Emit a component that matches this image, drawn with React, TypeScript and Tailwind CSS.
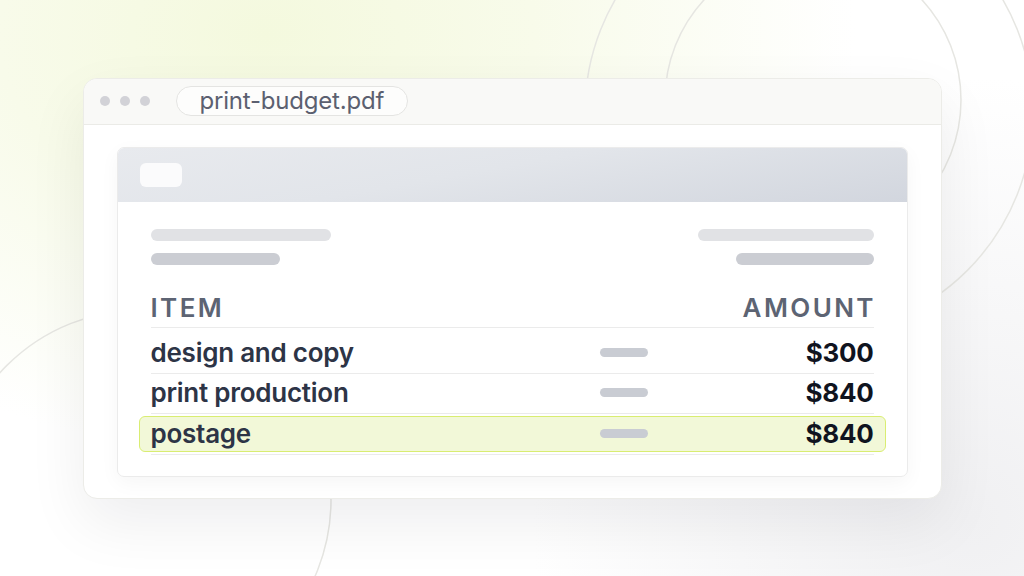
import React from 'react';

const rows = [
  { item: 'design and copy', amount: '$300', h: 'h-[46px]' },
  { item: 'print production', amount: '$840', h: 'h-[40px]' },
  { item: 'postage', amount: '$840', h: 'h-[41px]', active: true },
];

const Backdrop: React.FC = () => (
  <svg className="absolute inset-0 h-full w-full" viewBox="0 0 1024 576" fill="none">
    <circle cx="809" cy="112" r="224" stroke="#e6e6e2" strokeWidth="1.5" />
    <circle cx="813" cy="100" r="148" stroke="#e6e6e2" strokeWidth="1.5" />
    <circle cx="141" cy="500" r="190" stroke="#e6e6e2" strokeWidth="1.5" />
  </svg>
);

export default function App() {
  return (
    <div
      className="relative flex h-[576px] w-[1024px] items-center justify-center overflow-hidden bg-white bg-[radial-gradient(ellipse_at_26%_6%,#f4f9de_0%,#f8fbea_25%,rgba(255,255,255,0)_55%),radial-gradient(circle_at_95%_90%,#f0f0f2_0%,rgba(255,255,255,0)_40%)]"
      style={{ fontFamily: 'Inter, "Noto Sans", sans-serif' }}
    >
      <Backdrop />

      {/* Window */}
      <div className="relative w-[859px] overflow-hidden rounded-[14px] border border-[#ecece8] bg-white shadow-[0_24px_60px_rgba(20,20,30,0.07)]">
        {/* Title bar */}
        <div className="flex h-[46px] items-center border-b border-[#ebebe7] bg-[#f9f9f7] pl-4">
          <div className="flex items-center gap-[10px]">
            <span className="h-[10px] w-[10px] rounded-full bg-[#d2d2d7]" />
            <span className="h-[10px] w-[10px] rounded-full bg-[#d2d2d7]" />
            <span className="h-[10px] w-[10px] rounded-full bg-[#d2d2d7]" />
          </div>
          <div className="ml-[26px] flex h-[30px] items-center rounded-full border border-[#e4e4e2] bg-[#fdfdfc] px-[23px] text-[24px] leading-none tracking-[-0.2px] text-[#5b6070]">
            print-budget.pdf
          </div>
        </div>

        {/* Document */}
        <div className="px-[33px] pb-[21px] pt-[22px]">
          <div className="overflow-hidden rounded-[7px] border border-[#ebebeb] bg-white shadow-[0_6px_20px_rgba(0,0,0,0.04)]">
            <div className="flex h-[54px] items-center bg-[linear-gradient(170deg,#e8eaee_0%,#e2e5ea_45%,#d2d6de_100%)] px-[22px]">
              <div className="h-6 w-[42px] rounded-[6px] bg-[#fbfbfc]" />
            </div>

            <div className="px-[33px] pb-[21px] pt-[27px]">
              {/* Skeleton lines */}
              <div className="flex justify-between">
                <div className="flex flex-col gap-3">
                  <div className="h-3 w-[180px] rounded-full bg-[#e1e2e5]" />
                  <div className="h-3 w-[129px] rounded-full bg-[#cbcdd3]" />
                </div>
                <div className="flex flex-col items-end gap-3">
                  <div className="h-3 w-[176px] rounded-full bg-[#e1e2e5]" />
                  <div className="h-3 w-[138px] rounded-full bg-[#cbcdd3]" />
                </div>
              </div>

              {/* Table head */}
              <div className="mt-[27px] flex justify-between border-b border-[#ebebeb] pb-[3px] text-[26px] font-semibold leading-8 tracking-[2.4px] text-[#5d6473]">
                <span>ITEM</span>
                <span className="-mr-[2.4px]">AMOUNT</span>
              </div>

              {/* Rows */}
              {rows.map((r) => (
                <div key={r.item} className={`relative flex items-end border-b border-[#ebebeb] pb-1 ${r.h}`}>
                  {r.active && (
                    <div className="absolute -left-3 -right-3 bottom-[2px] top-[2px] rounded-[6px] border-[1.5px] border-[#d9ed72] bg-[#f2f8d8]" />
                  )}
                  <div className="relative grid w-full grid-cols-[1fr_48px_226px] items-center text-[26px] leading-8 tracking-[-0.25px]">
                    <span className="font-semibold text-[#2d3446]">{r.item}</span>
                    <span className="h-[9px] rounded-full bg-[#c9ccd3]" />
                    <span className="text-right font-bold text-[#10141f]">{r.amount}</span>
                  </div>
                </div>
              ))}
            </div>
          </div>
        </div>
      </div>
    </div>
  );
}
